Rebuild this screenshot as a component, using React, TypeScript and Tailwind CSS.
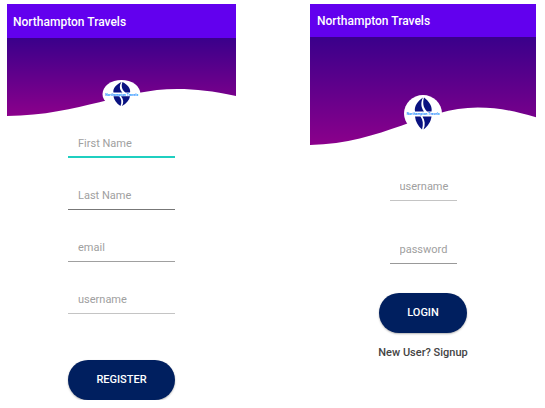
import type { ReactNode } from 'react';

const BRAND = 'Northampton Travels';

type LogoProps = { tall?: boolean };

function Logo({ tall = false }: LogoProps) {
  const height = tall ? 74 : 56;
  return (
    <svg
      viewBox={`0 0 76 ${height}`}
      className={tall ? 'h-[37px] w-[38px]' : 'h-7 w-[39px]'}
      role="img"
      aria-label={`${BRAND} logo`}
    >
      <ellipse cx="38" cy={height / 2} rx="38" ry={height / 2} fill="#fff" />
      <g transform={`scale(1 ${height / 74})`} fill="#0a1280">
        <path d="M38 5C27 12 20 23 22 33H40C34 25 33 15 38 5Z" />
        <path d="M40 5C37 15 38 25 46 33H55C57 23 50 12 40 5Z" />
        <path d="M22 43H33C38 50 39 58 36 69C28 62 23 53 22 43Z" />
        <path d="M37 43H55C54 53 48 62 39 69C43 60 42 51 37 43Z" />
      </g>
      <text
        x="38"
        y={height / 2 + 3}
        textAnchor="middle"
        fontSize="7"
        fontWeight="700"
        fill="#1e90ff"
        className="font-['Roboto',sans-serif]"
      >
        {BRAND}
      </text>
    </svg>
  );
}

function Banner({ tall = false }: LogoProps) {
  return (
    <div className={tall ? 'relative h-[108px]' : 'relative h-[78px]'}>
      <svg viewBox="0 0 229 78" preserveAspectRatio="none" className="block size-full" aria-hidden="true">
        <defs>
          <linearGradient id={tall ? 'dusk-tall' : 'dusk'} x1="0" y1="0" x2="0" y2="1">
            <stop offset="0" stopColor="#3a008b" />
            <stop offset="1" stopColor="#8b008b" />
          </linearGradient>
        </defs>
        <path
          d="M0 0H229V58C205 53 190 51 170 51C115 51 75 77 0 78Z"
          fill={tall ? 'url(#dusk-tall)' : 'url(#dusk)'}
        />
      </svg>
      <div className={`absolute inset-x-0 flex justify-center ${tall ? 'top-[58px]' : 'top-[42px]'}`}>
        <Logo tall={tall} />
      </div>
    </div>
  );
}

function Screen({ tall = false, children }: LogoProps & { children: ReactNode }) {
  return (
    <section className="flex flex-col">
      <header className={`flex items-center bg-[#6200ee] pt-px ${tall ? 'h-[33px] px-[7px]' : 'h-[34px] px-1.5'}`}>
        <h1 className="text-xs font-medium text-white">{BRAND}</h1>
      </header>
      <Banner tall={tall} />
      {children}
    </section>
  );
}

type FieldProps = { label: string; line: string; type?: string };

function Field({ label, line, type = 'text' }: FieldProps) {
  return (
    <input
      type={type}
      aria-label={label}
      placeholder={label}
      className={`h-[30px] w-full border-b pt-0.5 pl-[10px] text-[11px] text-[#444] outline-none placeholder:text-[#a0a0a0] ${line}`}
    />
  );
}

const buttonStyle =
  'h-10 w-full rounded-full bg-[#001f5f] pt-px text-[11px] font-medium text-white shadow-[0_1px_2px_rgba(0,0,0,0.3)]';

export default function App() {
  return (
    <main className="grid grid-cols-[229fr_226fr] gap-[74px] bg-white pt-1 pr-[9px] pl-[7px] font-['Roboto',sans-serif]">
      <Screen>
        <form className="mx-auto mt-3 flex w-[107px] flex-col gap-[22px]">
          <Field label="First Name" line="border-b-2 border-[#1fcfc0]" />
          <Field label="Last Name" line="border-[#777]" />
          <Field label="email" line="border-[#a0a0a0]" />
          <Field label="username" line="border-[#c4c4c4]" />
          <button type="button" className={`mt-6 ${buttonStyle}`}>
            REGISTER
          </button>
        </form>
      </Screen>
      <Screen tall>
        <form className="mx-auto mt-[26px] flex w-[88px] flex-col items-center">
          <div className="flex w-[67px] flex-col gap-[33px]">
            <Field label="username" line="border-[#c4c4c4]" />
            <Field label="password" type="password" line="border-[#999]" />
          </div>
          <button type="button" className={`mt-[29px] ${buttonStyle}`}>
            LOGIN
          </button>
          <a href="#signup" className="mt-3 text-[11px] leading-4 font-medium whitespace-nowrap text-[#444]">
            New User? Signup
          </a>
        </form>
      </Screen>
    </main>
  );
}
